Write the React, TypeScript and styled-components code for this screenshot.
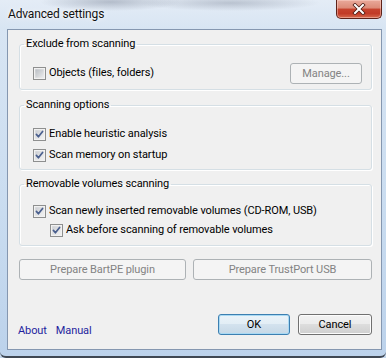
import React from 'react';
import styled, { createGlobalStyle, css } from 'styled-components';

const Global = createGlobalStyle`
  html, body { margin: 0; padding: 0; }
  body {
    width: 386px;
    height: 358px;
    overflow: hidden;
    background: #c5d7ec;
    font-family: Roboto, "Noto Sans", sans-serif;
    font-size: 11px;
    letter-spacing: -0.1px;
    color: #000;
  }
  * { box-sizing: border-box; }
`;

const Window = styled.div`
  width: 386px;
  height: 358px;
  display: flex;
  flex-direction: column;
  padding: 0 4px 6px 7px;
  border-bottom: 2px solid #3f4752;
  border-radius: 0 0 6px 6px;
  background:
    radial-gradient(ellipse 70px 9px at 110px 2px, rgba(90, 100, 120, 0.35), transparent),
    radial-gradient(ellipse 90px 8px at 230px 3px, rgba(90, 100, 120, 0.3), transparent),
    linear-gradient(180deg, #e4ecf6 0px, #d8e5f3 28px, #c9dcf0 60%, #bcd2eb 100%);
`;

const TitleBar = styled.div`
  height: 29px;
  display: flex;
  align-items: flex-start;
`;

const Title = styled.div`
  margin: 6px 0 0 1px;
  font-size: 12px;
  letter-spacing: -0.15px;
  line-height: 16px;
  color: #111;
  text-shadow: 0 0 6px rgba(255, 255, 255, 0.9), 0 0 2px #fff;
`;

const CloseButton = styled.div`
  margin-left: auto;
  width: 46px;
  height: 19px;
  border: 1px solid #5e2219;
  border-top: none;
  border-radius: 0 0 5px 5px;
  background: linear-gradient(180deg, #e9a99a 0%, #dc8a77 45%, #c6432e 50%, #c23b27 75%, #d76a4e 100%);
  box-shadow: inset 0 0 0 1px rgba(255, 220, 210, 0.45);
  display: flex;
  align-items: center;
  justify-content: center;
`;

const Client = styled.div`
  flex: 1;
  display: flex;
  flex-direction: column;
  border: 1px solid #8597b0;
  background: #f0f0f0;
  padding: 6px 9px 0 11px;
`;

const Group = styled.fieldset<{ $top?: number }>`
  margin: ${(p) => p.$top ?? 0}px 0 0 0;
  padding: 0;
  min-width: 0;
  border: 1px solid #d5dfe5;
  border-radius: 3px;
  box-shadow: 1px 1px 0 #fff, inset 1px 1px 0 #fff;
`;

const Legend = styled.legend`
  margin-left: 4px;
  padding: 0 2px;
  line-height: 16px;
`;

const GroupBody = styled.div<{ $pt: number; $pb: number; $gap: number }>`
  display: flex;
  flex-direction: column;
  gap: ${(p) => p.$gap}px;
  padding: ${(p) => p.$pt}px 9px ${(p) => p.$pb}px 13px;
`;

const Row = styled.div`
  display: flex;
  align-items: center;
  justify-content: space-between;
  height: 20px;
`;

const CheckLabel = styled.label<{ $indent?: number }>`
  display: flex;
  align-items: center;
  gap: 3px;
  height: 17px;
  margin-left: ${(p) => p.$indent ?? 0}px;
  line-height: 16px;
  white-space: nowrap;
`;

const Box = styled.svg`
  flex: none;
  display: block;
  margin-top: 1px;
`;

const buttonBase = css`
  height: 21px;
  border-radius: 3px;
  font-family: inherit;
  font-size: 11px;
  letter-spacing: -0.1px;
  padding: 0;
  line-height: 17px;
`;

const DisabledButton = styled.div<{ $w: number }>`
  ${buttonBase};
  width: ${(p) => p.$w}px;
  display: flex;
  align-items: center;
  justify-content: center;
  border: 1px solid #adb2b5;
  background: #f4f4f4;
  color: #838383;
`;

const PushButton = styled.div<{ $w: number; $default?: boolean }>`
  ${buttonBase};
  width: ${(p) => p.$w}px;
  display: flex;
  align-items: center;
  justify-content: center;
  color: #000;
  border: 1px solid ${(p) => (p.$default ? '#3c7fb1' : '#707070')};
  background: ${(p) =>
    p.$default
      ? 'linear-gradient(180deg, #eaf3f9 0%, #e2edf5 50%, #d3e2ee 50%, #c6d8e6 100%)'
      : 'linear-gradient(180deg, #f2f2f2 0%, #ebebeb 50%, #dddddd 50%, #cfcfcf 100%)'};
  box-shadow: inset 0 0 0 1px ${(p) => (p.$default ? '#a9d9f3' : '#fcfcfc')};
`;

const ButtonRow = styled.div`
  margin-top: 13px;
  display: flex;
  gap: 7px;
`;

const Footer = styled.div`
  margin-top: 34px;
  display: flex;
  align-items: flex-start;
`;

const Links = styled.div`
  margin: 9px 0 0 -1px;
  display: flex;
  gap: 9px;
  line-height: 16px;
`;

const Link = styled.a`
  color: #1f1f9e;
  text-decoration: none;
  cursor: pointer;
`;

const Actions = styled.div`
  margin-left: auto;
  display: flex;
  gap: 8px;
`;

function CheckBox({ checked }: { checked?: boolean }) {
  const id = checked ? 'gc' : 'gu';
  return (
    <Box width="13" height="13" viewBox="0 0 13 13">
      <defs>
        <linearGradient id={id} x1="0" y1="0" x2="1" y2="1">
          <stop offset="0" stopColor={checked ? '#c9ccd1' : '#b7bcc2'} />
          <stop offset="1" stopColor={checked ? '#f4f4f4' : '#ededed'} />
        </linearGradient>
      </defs>
      <rect x="0.5" y="0.5" width="12" height="12" fill="#f4f4f4" stroke="#8e8f8f" />
      <rect x="2" y="2" width="9" height="9" fill={`url(#${id})`} stroke="#eaeaea" strokeWidth="0.6" />
      {checked && (
        <path d="M3.4 6.4 L5.4 8.8 L9.6 3.4" fill="none" stroke="#4a5f8e" strokeWidth="1.7" strokeLinecap="round" strokeLinejoin="round" />
      )}
    </Box>
  );
}

function Check({ label, checked, indent }: { label: string; checked?: boolean; indent?: number }) {
  return (
    <CheckLabel $indent={indent}>
      <CheckBox checked={checked} />
      <span>{label}</span>
    </CheckLabel>
  );
}

export default function App() {
  return (
    <>
      <Global />
      <Window>
        <TitleBar>
          <Title>Advanced settings</Title>
          <CloseButton>
            <svg width="14" height="12" viewBox="0 0 14 12">
              <path d="M3 2 L11 10 M11 2 L3 10" stroke="#4a1a12" strokeWidth="3.6" strokeLinecap="square" />
              <path d="M3 2 L11 10 M11 2 L3 10" stroke="#ffffff" strokeWidth="2" strokeLinecap="square" />
            </svg>
          </CloseButton>
        </TitleBar>
        <Client>
          <Group>
            <Legend>Exclude from scanning</Legend>
            <GroupBody $pt={11} $pb={6} $gap={0}>
              <Row>
                <Check label="Objects (files, folders)" />
                <DisabledButton $w={72}>Manage...</DisabledButton>
              </Row>
            </GroupBody>
          </Group>
          <Group $top={7}>
            <Legend>Scanning options</Legend>
            <GroupBody $pt={12} $pb={6} $gap={4}>
              <Check label="Enable heuristic analysis" checked />
              <Check label="Scan memory on startup" checked />
            </GroupBody>
          </Group>
          <Group $top={6}>
            <Legend>Removable volumes scanning</Legend>
            <GroupBody $pt={10} $pb={7} $gap={2}>
              <Check label="Scan newly inserted removable volumes (CD-ROM, USB)" checked />
              <Check label="Ask before scanning of removable volumes" checked indent={17} />
            </GroupBody>
          </Group>
          <ButtonRow>
            <DisabledButton $w={167}>Prepare BartPE plugin</DisabledButton>
            <DisabledButton $w={179}>Prepare TrustPort USB</DisabledButton>
          </ButtonRow>
          <Footer>
            <Links>
              <Link>About</Link>
              <Link>Manual</Link>
            </Links>
            <Actions>
              <PushButton $w={72} $default>OK</PushButton>
              <PushButton $w={74}>Cancel</PushButton>
            </Actions>
          </Footer>
        </Client>
      </Window>
    </>
  );
}
